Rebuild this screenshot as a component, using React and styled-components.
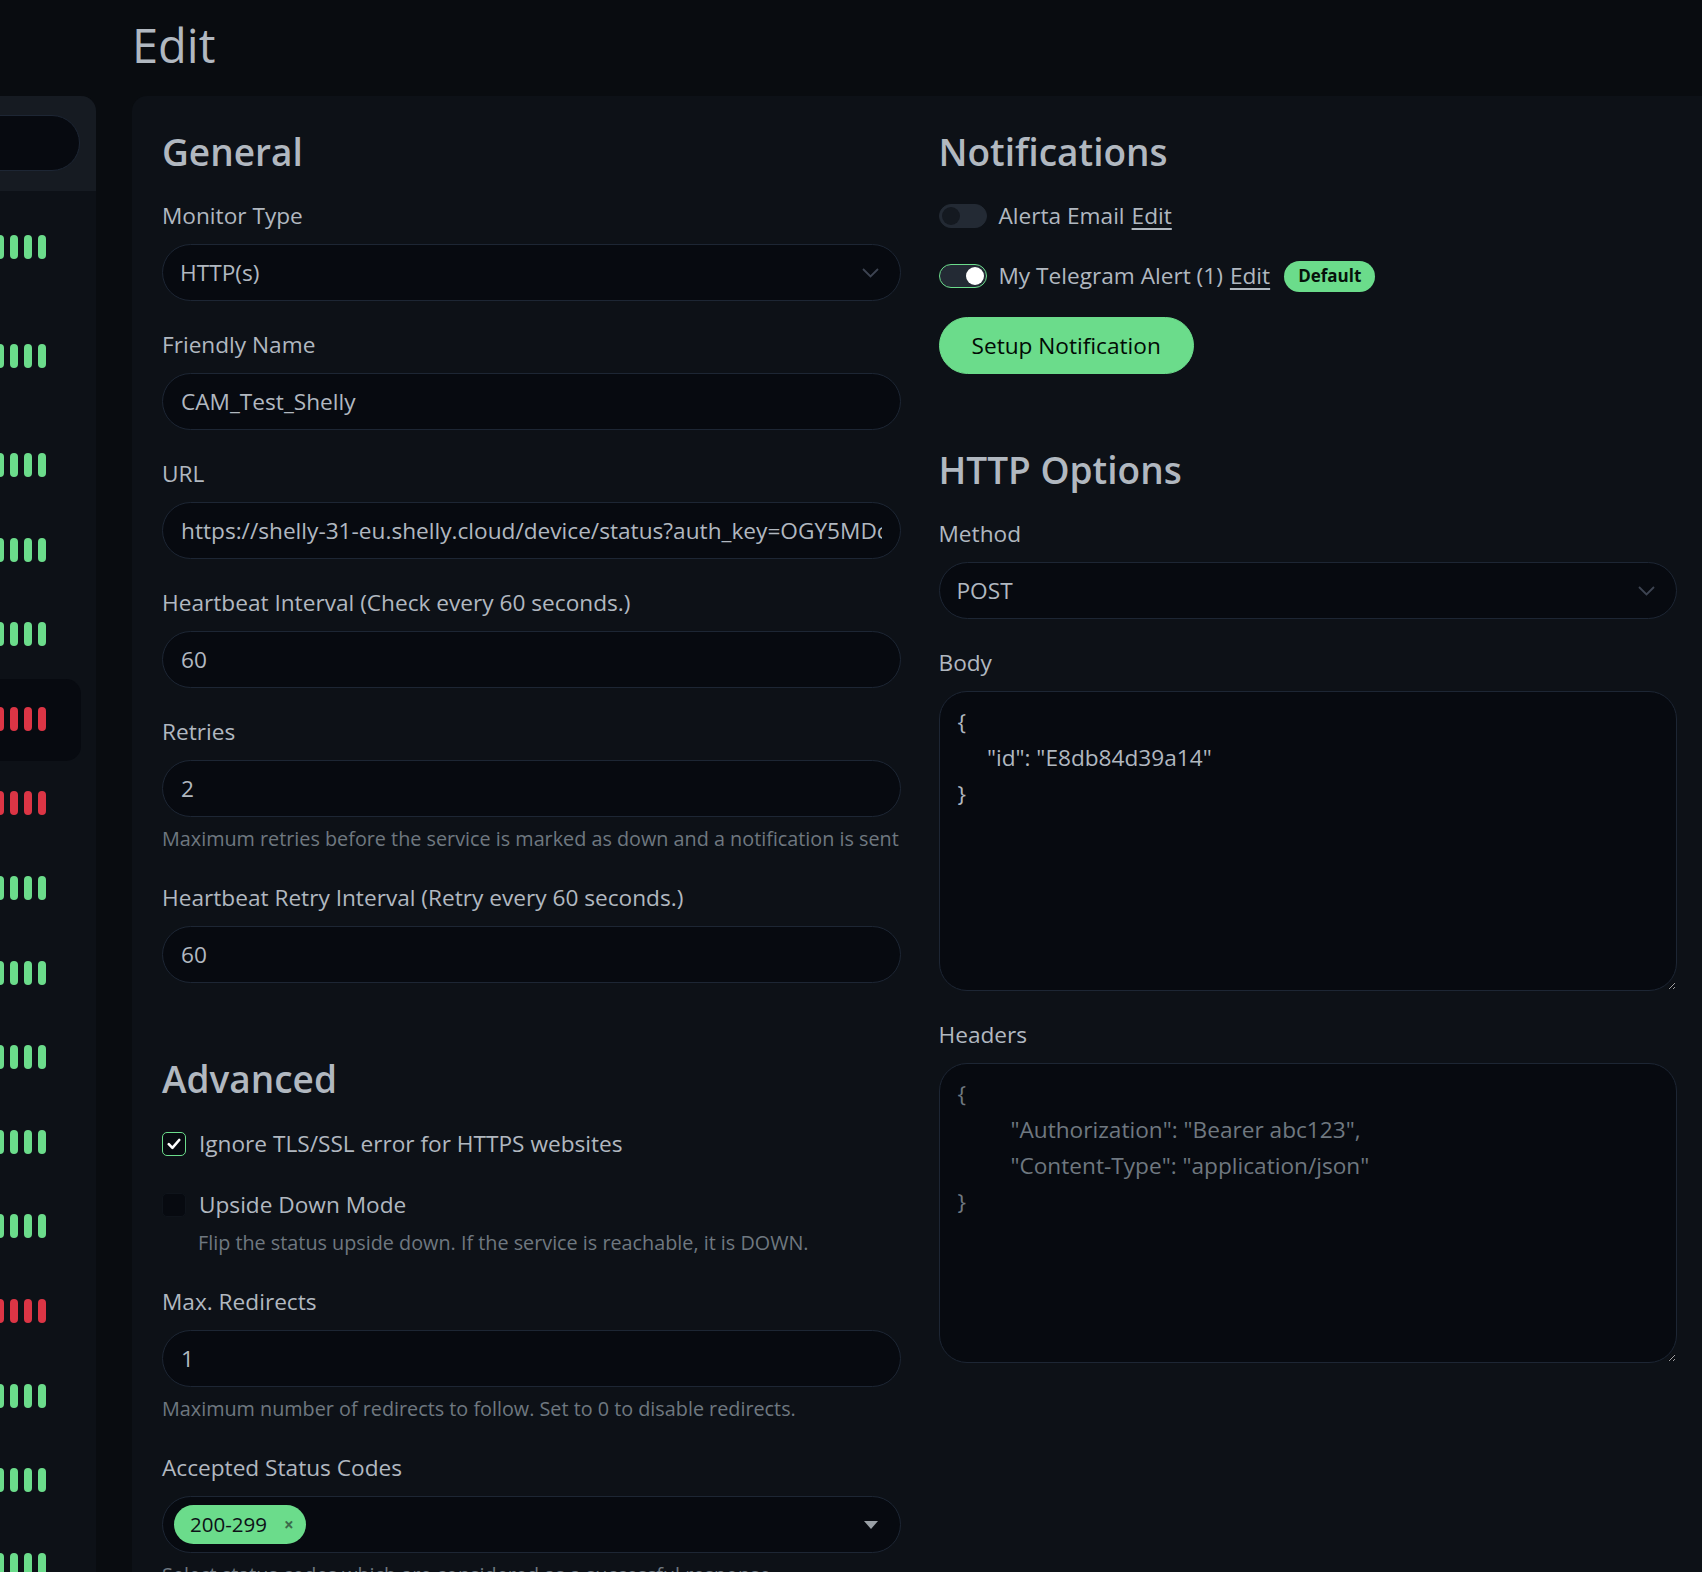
import React from 'react';
import styled, { createGlobalStyle } from 'styled-components';

const GlobalStyle = createGlobalStyle`
  html, body {
    margin: 0;
    background: #090c10;
    overflow: hidden;
  }
  body {
    font-family: "Open Sans", "Noto Sans", sans-serif;
    color: #b1b8c0;
    line-height: 1.5;
  }
  * { box-sizing: border-box; }
`;

const green = '#6bdc8b';
const FS = 22.65;

const Page = styled.div`
  display: flex;
  align-items: flex-start;
  width: 1702px;
  height: 1572px;
  overflow: hidden;
`;

const Sidebar = styled.aside`
  width: 96px;
  flex: none;
  margin-top: 96px;
  height: 1476px;
  background: #0d1117;
  border-top-right-radius: 15px;
`;

const SidebarHeader = styled.div`
  height: 95px;
  padding-top: 19px;
  background: #161b22;
  border-top-right-radius: 15px;
`;

const SearchPill = styled.div`
  height: 56px;
  margin: 0 16px 0 -60px;
  background: #070a10;
  border: 1px solid #1d2634;
  border-radius: 28px;
`;

const MonitorList = styled.div`
  padding-top: 16px;
`;

const MonitorItem = styled.div`
  height: ${p => (p.tall ? '107px' : '82.6px')};
  margin: 0 15px 2px -40px;
  padding: 28px 35px 0 0;
  border-radius: 15px;
  background: ${p => (p.active ? '#070a10' : 'transparent')};
`;

const BeatBar = styled.div`
  display: flex;
  justify-content: flex-end;
  gap: 6px;
`;

const Beat = styled.div`
  flex: none;
  width: 8px;
  height: 24px;
  border-radius: 4px;
  background: ${p => (p.down ? '#dc3545' : green)};
`;

const Main = styled.main`
  flex: 1;
  margin-left: 36px;
  margin-right: -5px;
`;

const Title = styled.h1`
  height: 96px;
  margin: 0;
  padding-top: 17px;
  font-size: 47px;
  font-weight: 500;
  line-height: 1.2;
  color: #b1b8c0;
`;

const Card = styled.div`
  background: #0d1117;
  border-radius: 15px 0 0 0;
  padding: 32px 30px;
  min-height: 1476px;
`;

const Columns = styled.div`
  display: grid;
  grid-template-columns: 1fr 1fr;
  column-gap: 38px;
`;

const Column = styled.div``;

const SectionTitle = styled.h2`
  margin: ${p => (p.spaced ? '72px' : '0')} 0 24px;
  font-size: 37px;
  font-weight: 600;
  line-height: 48px;
  color: #b1b8c0;
`;

const Field = styled.div`
  margin: 0 0 28px;
`;

const Label = styled.label`
  display: block;
  margin-bottom: 12px;
  font-size: ${FS}px;
  line-height: 32px;
`;

const Input = styled.input`
  display: block;
  width: 100%;
  height: 57px;
  padding: 0 18px;
  font: inherit;
  font-size: ${FS}px;
  color: #b1b8c0;
  background: #070a10;
  border: 1px solid #1d2634;
  border-radius: 28.5px;
  outline: none;
`;

const SelectWrap = styled.div`
  position: relative;
`;

const Select = styled.select`
  display: block;
  width: 100%;
  height: 57px;
  padding: 0 60px 0 17px;
  font: inherit;
  font-size: ${FS}px;
  color: #b1b8c0;
  background: #070a10;
  border: 1px solid #1d2634;
  border-radius: 28.5px;
  appearance: none;
  outline: none;
`;

const Chevron = styled.svg`
  position: absolute;
  right: 22px;
  top: 50%;
  margin-top: -5px;
`;

const Help = styled.div`
  margin-top: 6px;
  padding-left: ${p => (p.indent ? '36px' : '0')};
  font-size: 19.8px;
  line-height: 31px;
  color: #6f7880;
  white-space: nowrap;
`;

const CheckLine = styled.div`
  display: flex;
  align-items: center;
  gap: 13px;
  font-size: ${FS}px;
  line-height: 33px;
`;

const CheckBox = styled.span`
  flex: none;
  display: flex;
  align-items: center;
  justify-content: center;
  width: 24px;
  height: 24px;
  border-radius: 5px;
  background: #070a10;
  border: 1.5px solid ${p => (p.checked ? green : '#0f141b')};
`;

const SwitchLine = styled.div`
  display: flex;
  align-items: center;
  margin: 0 0 ${p => (p.last ? '25px' : '28px')};
  font-size: ${FS}px;
  line-height: 32px;
`;

const Switch = styled.span`
  flex: none;
  position: relative;
  width: 48px;
  height: 24px;
  margin-right: 12px;
  border-radius: 12px;
  background: #232a34;
  border: 1px solid ${p => (p.on ? green : '#232a34')};

  &::after {
    content: '';
    position: absolute;
    top: 2px;
    left: ${p => (p.on ? '26px' : '2px')};
    width: 18px;
    height: 18px;
    border-radius: 50%;
    background: ${p => (p.on ? '#ffffff' : '#141920')};
  }
`;

const EditLink = styled.a`
  margin-left: 7px;
  color: #b1b8c0;
  text-decoration: underline;
  text-underline-offset: 4px;
`;

const Badge = styled.span`
  margin-left: 14px;
  height: 31px;
  padding: 0 14px;
  display: inline-flex;
  align-items: center;
  border-radius: 16px;
  background: ${green};
  color: #06100a;
  font-size: 17px;
  font-weight: 700;
`;

const PrimaryButton = styled.button`
  display: block;
  height: 57px;
  padding: 0 32px;
  font: inherit;
  font-size: ${FS}px;
  color: #020b05;
  background: ${green};
  border: 1px solid ${green};
  border-radius: 28.5px;
`;

const TextArea = styled.textarea`
  display: block;
  width: 100%;
  height: 300px;
  padding: 12px 18px;
  font: inherit;
  font-size: ${FS}px;
  line-height: 36px;
  color: #b1b8c0;
  background: #070a10;
  border: 1px solid #1d2634;
  border-radius: 28px;
  outline: none;

  &::placeholder {
    color: #6f7880;
  }
`;

const MultiSelect = styled.div`
  display: flex;
  align-items: center;
  height: 57px;
  padding-left: 11px;
  background: #070a10;
  border: 1px solid #1d2634;
  border-radius: 28.5px;
`;

const Tag = styled.span`
  display: inline-flex;
  align-items: center;
  height: 39px;
  padding: 0 12px 0 16px;
  border-radius: 20px;
  background: ${green};
  color: #0d1117;
  font-size: 20.5px;
`;

const TagClose = styled.span`
  margin-left: 17px;
  font-size: 17px;
  font-weight: 700;
  color: #3c6a4c;
`;

const Caret = styled.span`
  margin: 0 22px 0 auto;
  width: 0;
  height: 0;
  border-left: 7px solid transparent;
  border-right: 7px solid transparent;
  border-top: 8px solid #9aa0a6;
`;

const monitors = [
  { tall: true }, { tall: true }, {}, {}, {}, { active: true, down: true },
  { down: true }, {}, {}, {}, {}, {}, { down: true }, {}, {}, {}
];

const ChevronIcon = () => (
  <Chevron width="17" height="10" viewBox="0 0 17 10">
    <path d="M1 1l7.5 7.5L16 1" fill="none" stroke="#3d4452" strokeWidth="1.8" />
  </Chevron>
);

const bodyJson = '{\n     "id": "E8db84d39a14"\n}';
const headersJson = '{\n         "Authorization": "Bearer abc123",\n         "Content-Type": "application/json"\n}';

function App() {
  return (
    <Page>
      <GlobalStyle />
      <Sidebar>
        <SidebarHeader>
          <SearchPill />
        </SidebarHeader>
        <MonitorList>
          {monitors.map((m, i) => (
            <MonitorItem key={i} tall={m.tall} active={m.active}>
              <BeatBar>
                {Array.from({ length: 8 }).map((_, j) => (
                  <Beat key={j} down={m.down} />
                ))}
              </BeatBar>
            </MonitorItem>
          ))}
        </MonitorList>
      </Sidebar>

      <Main>
        <Title>Edit</Title>
        <Card>
          <Columns>
            <Column>
              <SectionTitle>General</SectionTitle>

              <Field>
                <Label>Monitor Type</Label>
                <SelectWrap>
                  <Select defaultValue="http">
                    <option value="http">HTTP(s)</option>
                  </Select>
                  <ChevronIcon />
                </SelectWrap>
              </Field>

              <Field>
                <Label>Friendly Name</Label>
                <Input defaultValue="CAM_Test_Shelly" />
              </Field>

              <Field>
                <Label>URL</Label>
                <Input defaultValue="https://shelly-31-eu.shelly.cloud/device/status?auth_key=OGY5MDc2YjE4NzE3" />
              </Field>

              <Field>
                <Label>Heartbeat Interval (Check every 60 seconds.)</Label>
                <Input defaultValue="60" />
              </Field>

              <Field>
                <Label>Retries</Label>
                <Input defaultValue="2" />
                <Help>Maximum retries before the service is marked as down and a notification is sent</Help>
              </Field>

              <Field>
                <Label>Heartbeat Retry Interval (Retry every 60 seconds.)</Label>
                <Input defaultValue="60" />
              </Field>

              <SectionTitle spaced>Advanced</SectionTitle>

              <Field>
                <CheckLine>
                  <CheckBox checked>
                    <svg width="14" height="12" viewBox="0 0 14 12">
                      <path d="M1.8 6.2l3.6 3.6L12.2 2" fill="none" stroke="#fff" strokeWidth="2.6" strokeLinecap="round" strokeLinejoin="round" />
                    </svg>
                  </CheckBox>
                  Ignore TLS/SSL error for HTTPS websites
                </CheckLine>
              </Field>

              <Field>
                <CheckLine>
                  <CheckBox />
                  Upside Down Mode
                </CheckLine>
                <Help indent>Flip the status upside down. If the service is reachable, it is DOWN.</Help>
              </Field>

              <Field>
                <Label>Max. Redirects</Label>
                <Input defaultValue="1" />
                <Help>Maximum number of redirects to follow. Set to 0 to disable redirects.</Help>
              </Field>

              <Field>
                <Label>Accepted Status Codes</Label>
                <MultiSelect>
                  <Tag>
                    200-299
                    <TagClose>×</TagClose>
                  </Tag>
                  <Caret />
                </MultiSelect>
                <Help>Select status codes which are considered as a successful response.</Help>
              </Field>
            </Column>

            <Column>
              <SectionTitle>Notifications</SectionTitle>

              <SwitchLine>
                <Switch />
                Alerta Email
                <EditLink>Edit</EditLink>
              </SwitchLine>

              <SwitchLine last>
                <Switch on />
                My Telegram Alert (1)
                <EditLink>Edit</EditLink>
                <Badge>Default</Badge>
              </SwitchLine>

              <PrimaryButton>Setup Notification</PrimaryButton>

              <SectionTitle spaced>HTTP Options</SectionTitle>

              <Field>
                <Label>Method</Label>
                <SelectWrap>
                  <Select defaultValue="POST">
                    <option value="POST">POST</option>
                  </Select>
                  <ChevronIcon />
                </SelectWrap>
              </Field>

              <Field>
                <Label>Body</Label>
                <TextArea defaultValue={bodyJson} />
              </Field>

              <Field>
                <Label>Headers</Label>
                <TextArea placeholder={headersJson} />
              </Field>
            </Column>
          </Columns>
        </Card>
      </Main>
    </Page>
  );
}

export default App;
